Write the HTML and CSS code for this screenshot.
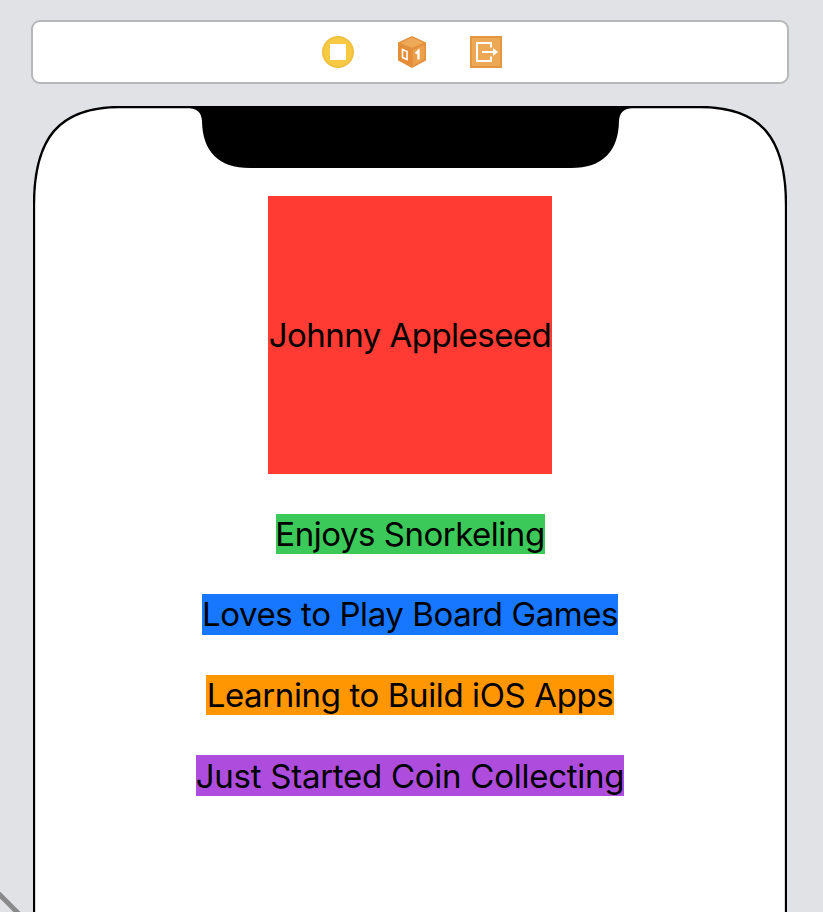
FILE: index.html
```html
<!DOCTYPE html>
<html lang="en">
<head>
<meta charset="utf-8">
<title>Storyboard</title>
<link rel="stylesheet" href="styles.css">
</head>
<body>
<header class="scene-dock">
  <svg class="icon" viewBox="0 0 34 34">
    <circle cx="17" cy="17" r="15" fill="#f8ca43" stroke="#f1bf40" stroke-width="2"/>
    <rect x="9" y="9" width="16" height="16" fill="#fff"/>
  </svg>
  <svg class="icon" viewBox="0 0 34 34">
    <path d="M17 1 31 7.500V25.500L17 33 3 25.500V7.500Z" fill="#e2903d"/>
    <path d="M17 2.500 28.500 8 17 13 5.500 8Z" fill="#efaa59"/>
    <path d="M4.500 10 16 15V30.500L4.500 24.500Z" fill="#e58c35"/>
    <path d="M18 15 29.500 10V24.500L18 30.500Z" fill="#eca04a"/>
    <path d="M7.500 14.500 12 16.500V24.500L7.500 22.500Z" fill="none" stroke="#fff" stroke-width="1.600"/>
    <path d="M20.500 18.500 23.500 15.800V24.500" fill="none" stroke="#fff" stroke-width="2.300"/>
  </svg>
  <svg class="icon" viewBox="0 0 34 34">
    <rect x="2" y="2" width="30" height="30" fill="#eca854" stroke="#e39740" stroke-width="2"/>
    <path d="M22 12.500V8H8V26H22V21.500" fill="none" stroke="#fff" stroke-width="2"/>
    <path d="M13 17H26" fill="none" stroke="#fff" stroke-width="2"/>
    <path d="M24 13 29 17 24 21Z" fill="#fff"/>
  </svg>
</header>
<main class="phone">
  <svg class="bezel" viewBox="33 106 754 806">
    <path d="M34 920V205C34 138 59 107 120 107H700C761 107 786 138 786 205V920" fill="#fff" stroke="#000" stroke-width="2.300"/>
    <path d="M186 107.500C197 108.500 201.500 112 202 121C202.500 151 218 168 250 168H571C603 168 618.500 151 619 121C619.500 112 624 108.500 635 107.500Z"/>
  </svg>
  <section class="stack">
    <div class="label name"><span>Johnny Appleseed</span></div>
    <div class="label snorkeling"><span>Enjoys Snorkeling</span></div>
    <div class="label games"><span>Loves to Play Board Games</span></div>
    <div class="label apps"><span>Learning to Build iOS Apps</span></div>
    <div class="label coins"><span>Just Started Coin Collecting</span></div>
  </section>
</main>
<svg class="segue" viewBox="0 0 20 20"><path d="M-3 0 20 23" stroke="#8a8a8a" stroke-width="5"/></svg>
</body>
</html>
```
FILE: styles.css
```css
* { box-sizing: border-box; }
body {
  position: relative;
  margin: 0;
  height: 912px;
  padding: 20px 34px 0 31px;
  overflow: hidden;
  background: #e1e2e6;
  color: #000;
  font-family: Inter, "Liberation Sans", sans-serif;
}
.scene-dock {
  display: flex;
  align-items: center;
  justify-content: center;
  gap: 40px;
  height: 64px;
  padding-left: 4px;
  border: 2px solid #b6b7bb;
  border-radius: 9px;
  background: #fff;
}
.icon { width: 34px; height: 34px; }
.phone {
  position: relative;
  width: 754px;
  height: 806px;
  margin: 22px 0 0 2px;
}
.bezel {
  position: absolute;
  inset: 0;
  width: 754px;
  height: 806px;
}
.stack {
  position: relative;
  display: flex;
  flex-direction: column;
  align-items: center;
  gap: 40px;
  padding-top: 90px;
}
.label {
  display: flex;
  align-items: center;
  justify-content: center;
  height: 40.600px;
  font-size: 33px;
  line-height: 40px;
  white-space: nowrap;
}
.name { width: 284px; height: 277.500px; background: #ff3b33; letter-spacing: -0.530px; }
.snorkeling { width: 269px; background: #3bc959; letter-spacing: -0.480px; }
.games { width: 416px; background: #1877ff; letter-spacing: -0.410px; }
.apps { width: 408px; background: #ff9602; letter-spacing: -0.380px; }
.coins { width: 428px; background: #ae4ddd; letter-spacing: -0.260px; }
.segue {
  position: absolute;
  left: 0;
  bottom: 0;
  width: 20px;
  height: 20px;
}
```
